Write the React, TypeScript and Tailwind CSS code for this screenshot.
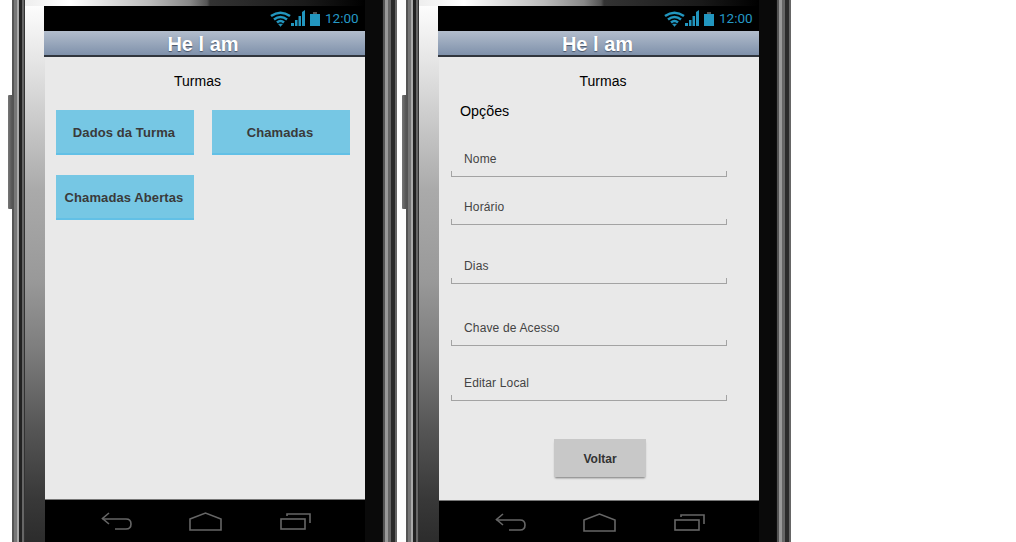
const NavIcons = () => (
  <div className="flex items-center pl-[56px] pt-[12px]">
    <svg width="31" height="19" viewBox="0 0 31 19" fill="none" stroke="#666" strokeWidth="1.6">
      <path d="M8 1 L1.5 6.5 L8 12" />
      <path d="M1.5 7 H25 Q30 7 30 12 Q30 17 25 17 H14" />
    </svg>
    <svg className="ml-[57px]" width="33" height="19" viewBox="0 0 33 19" fill="none" stroke="#666" strokeWidth="1.6">
      <path d="M1 7 L16.5 1 L32 7 V18 H1 Z" />
    </svg>
    <svg className="ml-[58px]" width="31" height="17" viewBox="0 0 31 17" fill="none" stroke="#666" strokeWidth="1.6">
      <rect x="1" y="6" width="24" height="10" />
      <path d="M7 3 V1 H30 V10" />
    </svg>
  </div>
);

const StatusBar = () => (
  <div className="flex h-[25px] items-center bg-black pl-[226px] text-[#2599c6]">
    <svg width="21" height="16" viewBox="0 0 21 16" fill="none" stroke="#2296bf" strokeWidth="2.6">
      <path d="M1 5 Q10.5 -1.5 20 5" />
      <path d="M4 8.5 Q10.5 3.5 17 8.5" />
      <path d="M7 11.5 Q10.5 8.5 14 11.5" />
      <path d="M8.5 13 L10.5 15.5 L12.5 13 Z" fill="#2296bf" strokeWidth="0.5" />
    </svg>
    <svg className="mb-[2px]" width="14" height="16" viewBox="0 0 14 16">
      <path d="M0 13 H3 V16 H0 Z M4 10 H6.5 V16 H4 Z M7.5 6 H10 V16 H7.5 Z M11 2 L14 0 V16 H11 Z" fill="#2296bf" />
    </svg>
    <div className="ml-[5px] flex w-[10px] flex-col items-center">
      <div className="h-[2px] w-[4px] bg-[#555]" />
      <div className="h-[12px] w-[10px] bg-[#2296bf]" />
    </div>
    <span className="ml-[5px] font-['Roboto',sans-serif] text-[13.5px] leading-none font-normal">12:00</span>
  </div>
);

const Header = () => (
  <div className="flex h-[26px] items-center justify-center border-b-2 border-[#30353d] bg-[linear-gradient(to_bottom,#b2bdcc,#7f91ab)] pt-[2px] pr-[3px] text-[20px] leading-none font-bold text-white [text-shadow:0_1px_1px_#4a5568]">
    He l am
  </div>
);

const Frame = ({ second, children }: { second?: boolean; children: React.ReactNode }) => (
  <div className="relative flex h-[542px] w-[385px] shrink-0">
    <div className="absolute top-[95px] left-[-4px] h-[114px] w-[4px] rounded-l-[1px] bg-[linear-gradient(to_right,#777,#555)]" />
    <div className="w-[13px] shrink-0 bg-[linear-gradient(to_right,#555_0_2px,#777_2px_5px,#aaa_5px_7px,#222_7px_10px,#666_10px_12px,#333_12px_13px)]" />
    <div className="flex w-[340px] shrink-0 flex-col bg-[linear-gradient(to_bottom,#fff_0,#ddd_80px,#aaa_190px,#999_280px,#7d7d7d_350px,#555_430px,#383838_500px,#2c2c2c_542px)]">
      <div className="h-[6px] shrink-0 bg-[linear-gradient(to_right,#eee_0,#fff_45px,#bbb_125px,#888_165px,#555_182px,#333_185px,#1a1a1a_280px,#000_340px)]" />
      <div className={second ? 'ml-[19px] flex w-[322px] flex-1 flex-col' : 'ml-[19px] flex w-[321px] flex-1 flex-col'}>
        {children}
      </div>
    </div>
    <div className="flex-1 bg-[#0a0a0a]" />
    <div className="w-[15px] shrink-0 bg-[linear-gradient(to_right,#111_0_1px,#555_1px_3px,#999_3px_6px,#666_6px_9px,#2b2b2b_9px_13px,#666_13px_15px)]" />
  </div>
);

const Button = ({ label }: { label: string }) => (
  <div className="flex h-[45px] items-center justify-center border-b-2 border-[#62c0e6] bg-[#76c7e4] pt-[2px] pr-[2px] text-[13px] font-bold tracking-[0.1px] text-[#3a3a3a]">
    {label}
  </div>
);

const PhoneOne = () => (
  <Frame>
    <StatusBar />
    <Header />
    <div className="ml-px flex-1 bg-[#e9e9e9] pt-[16px]">
      <p className="pr-[15px] text-center text-[14px] leading-[16px] text-black">Turmas</p>
      <div className="mt-[21px] grid grid-cols-[138px_138px] gap-x-[18px] gap-y-[20px] pl-[11px]">
        <Button label="Dados da Turma" />
        <Button label="Chamadas" />
        <Button label="Chamadas Abertas" />
      </div>
    </div>
    <div className="ml-px h-[43px] border-t border-[#777] bg-black">
      <NavIcons />
    </div>
  </Frame>
);

const fields = [
  { label: 'Nome', gap: 'mt-[33px]' },
  { label: 'Horário', gap: 'mt-[23px]' },
  { label: 'Dias', gap: 'mt-[34px]' },
  { label: 'Chave de Acesso', gap: 'mt-[37px]' },
  { label: 'Editar Local', gap: 'mt-[30px]' }
];

const PhoneTwo = () => (
  <Frame second>
    <StatusBar />
    <Header />
    <div className="ml-px flex-1 bg-[#e9e9e9] pt-[16px]">
      <p className="pl-[7px] text-center text-[14px] leading-[16px] text-black">Turmas</p>
      <p className="mt-[14px] pl-[21px] text-[14.3px] leading-[16px] text-black">Opções</p>
      {fields.map((field) => (
        <div key={field.label} className={`${field.gap} ml-[12px] w-[276px]`}>
          <div className="pl-[13px] text-[12px] leading-[14px] tracking-[0.15px] text-[#444]">{field.label}</div>
          <div className="mt-[5px] h-[6px] border-x border-b border-[#a3a3a3]" />
        </div>
      ))}
      <div className="mt-[38px] ml-[115px] flex h-[38px] w-[92px] items-center justify-center bg-[#c8c8c8] pt-[2px] text-[12px] font-bold text-[#333] shadow-[0_2px_2px_-1px_#777]">
        Voltar
      </div>
    </div>
    <div className="ml-px h-[42px] border-t border-r border-t-[#777] border-r-white bg-black">
      <NavIcons />
    </div>
  </Frame>
);

const App = () => (
  <div className="flex h-[542px] w-[1016px] gap-[9px] overflow-hidden bg-white pl-[12px] font-['Liberation_Sans',Arial,sans-serif]">
    <PhoneOne />
    <PhoneTwo />
  </div>
);

export default App;
